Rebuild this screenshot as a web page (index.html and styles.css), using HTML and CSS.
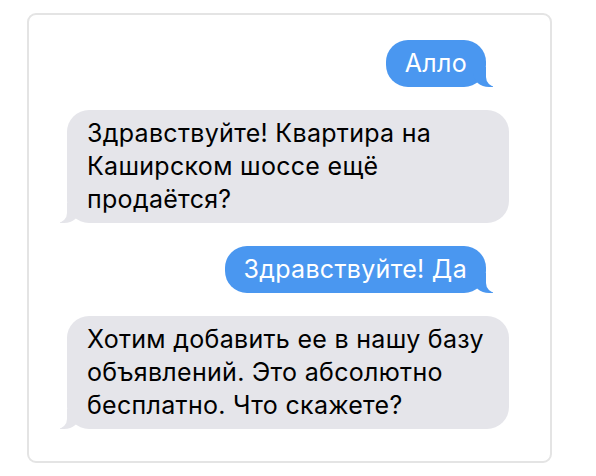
FILE: index.html
```html
<!DOCTYPE html>
<html>
<head>
  <title>Чат</title>
  <link rel="stylesheet" href="styles.css">
</head>
<body>
  <div class="chat">
    <div class="msg out">Алло</div>
    <div class="msg in">Здравствуйте! Квартира на Каширском шоссе ещё продаётся?</div>
    <div class="msg out">Здравствуйте! Да</div>
    <div class="msg in">Хотим добавить ее в нашу базу объявлений. Это абсолютно бесплатно. Что скажете?</div>
  </div>
</body>
</html>
```
FILE: styles.css
```css
body {
  margin: 0;
  background-color: #fff;
  font-family: Inter, "Noto Sans", sans-serif;
}
.chat {
  box-sizing: border-box;
  width: 525px;
  height: 450px;
  margin: 13px 0 0 27px;
  padding: 25px 64px 0 38px;
  border: 2px solid #e4e4e4;
  border-radius: 9px;
  display: flex;
  flex-direction: column;
  gap: 23px;
}
.msg {
  position: relative;
  padding: 7px 19px;
  font-size: 25px;
  line-height: 33px;
  letter-spacing: 0.3px;
  border-radius: 22px;
}
.out {
  align-self: flex-end;
  background-color: #4a97f0;
  color: #fff;
}
.in {
  align-self: flex-start;
  width: 403px;
  padding-left: 20px;
  background-color: #e5e5ea;
  color: #000;
}
.msg::before,
.msg::after {
  content: "";
  position: absolute;
  bottom: 0;
  height: 20px;
}
.out::before {
  right: -7px;
  width: 20px;
  background-color: #4a97f0;
  border-bottom-left-radius: 16px 14px;
}
.out::after {
  right: -26px;
  width: 26px;
  background-color: #fff;
  border-bottom-left-radius: 10px;
}
.in::before {
  left: -7px;
  width: 20px;
  background-color: #e5e5ea;
  border-bottom-right-radius: 16px 14px;
}
.in::after {
  left: -26px;
  width: 26px;
  background-color: #fff;
  border-bottom-right-radius: 10px;
}
```
